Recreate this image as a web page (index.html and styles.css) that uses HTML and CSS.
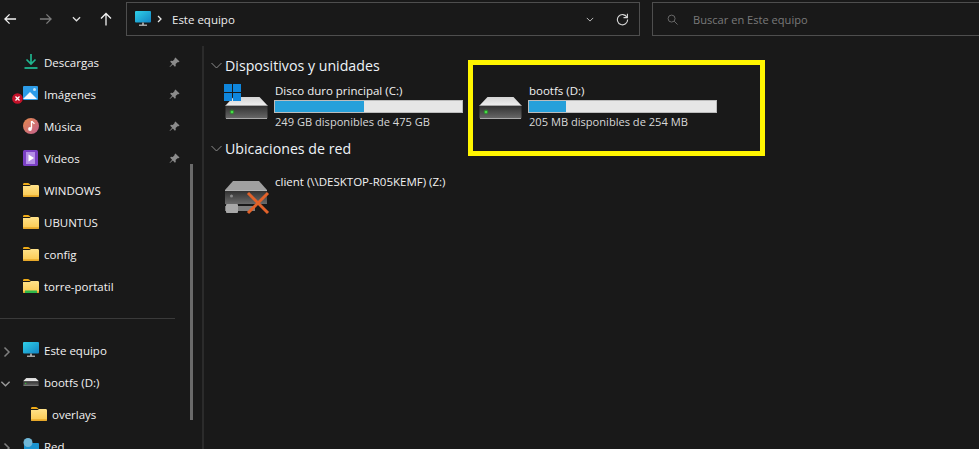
FILE: index.html
```html
<!DOCTYPE html>
<html lang="es">
<head>
<meta charset="utf-8">
<title>Este equipo</title>
<link rel="stylesheet" href="styles.css">
</head>
<body>
<svg class="defs" width="0" height="0" aria-hidden="true">
  <defs>
    <linearGradient id="driveTop" x1="0" y1="0" x2="0" y2="1"><stop offset="0" stop-color="#d4d4d4"/><stop offset="1" stop-color="#efefef"/></linearGradient>
    <linearGradient id="driveFront" x1="0" y1="0" x2="0" y2="1"><stop offset="0" stop-color="#2e2e2e"/><stop offset="1" stop-color="#6a6a6a"/></linearGradient>
    <linearGradient id="screen" x1="0" y1="0" x2="1" y2="1"><stop offset="0" stop-color="#2fd0e8"/><stop offset="1" stop-color="#1384c4"/></linearGradient>
    <linearGradient id="folder" x1="0" y1="0" x2="0" y2="1"><stop offset="0" stop-color="#ffe28a"/><stop offset="1" stop-color="#fbc94f"/></linearGradient>
    <linearGradient id="music" x1="0" y1="0" x2="1" y2="1"><stop offset="0" stop-color="#e58a4c"/><stop offset="1" stop-color="#c25f8e"/></linearGradient>
    <symbol id="i-folder" viewBox="0 0 16 14">
      <path d="M0 1.500C0 .7.500 0 1.300 0h3.600c.6 0 1 .3 1.500.8L7.600 2H0z" fill="#eeaa17"/>
      <path d="M0 3h6.500l1.500-1h6.700c.7 0 1.300.6 1.300 1.300v9.400c0 .7-.6 1.300-1.300 1.300H1.300C.6 14 0 13.400 0 12.700z" fill="url(#folder)"/>
      <path d="M0 12.600c0 .8.600 1.400 1.300 1.400h13.400c.7 0 1.300-.6 1.300-1.400v-.3H0z" fill="#e8a829"/>
    </symbol>
    <symbol id="i-pc" viewBox="0 0 16 16">
      <rect x="0" y="0" width="16" height="11.500" rx="1" fill="url(#screen)"/>
      <rect x="7" y="11.500" width="2" height="2.500" fill="#9a9a9a"/>
      <rect x="4" y="13.600" width="8" height="1.200" fill="#c4c4c4"/>
    </symbol>
    <symbol id="i-drive" viewBox="0 0 42 22">
      <path d="M8 0h26l8 8.500H0z" fill="url(#driveTop)"/>
      <path d="M0 8h42v12.500c0 .8-.7 1.500-1.500 1.500H1.500C.7 22 0 21.300 0 20.500z" fill="url(#driveFront)"/>
      <path d="M0 8h42v1H0zM.5 21h41v1H.5z" fill="#a9a9a9"/>
      <circle cx="6.500" cy="15" r="2.400" fill="#23a823" opacity=".55"/>
      <circle cx="6.500" cy="15" r="1.300" fill="#45e145"/>
    </symbol>
    <symbol id="i-pin" viewBox="0 0 12 12">
      <path d="M7 .5 11.500 5l-1.200.8-1-.2L7.200 7.700l.2 2-1 .8-2.200-2.300L1 11l-.4-.4 2.800-3.200L1.300 5.200l.8-1 2 .2 2.100-2.100-.1-1z" fill="#8b8b8b"/>
    </symbol>
    <symbol id="i-chev-r" viewBox="0 0 8 12"><path d="M1.500 1.500 6 6l-4.500 4.500" fill="none" stroke="#7f7f7f" stroke-width="1.500"/></symbol>
    <symbol id="i-chev-d" viewBox="0 0 12 8"><path d="M1.500 1.500 6 6l4.500-4.500" fill="none" stroke="#9a9a9a" stroke-width="1.500"/></symbol>
    <symbol id="i-exp" viewBox="0 0 11 7"><path d="M.5 1 5.500 6l5-5" fill="none" stroke="#8d8d8d" stroke-width="1"/></symbol>
  </defs>
</svg>

<header class="toolbar">
  <nav class="nav-buttons">
    <svg class="nav-icon nav-back" viewBox="0 0 14 12"><path d="M13 6H1.500M6 1 1 6l5 5" fill="none" stroke="#f2f2f2" stroke-width="1.400"/></svg>
    <svg class="nav-icon nav-forward" viewBox="0 0 14 12"><path d="M1 6h11.500M8 1l5 5-5 5" fill="none" stroke="#7c7c7c" stroke-width="1.400"/></svg>
    <svg class="nav-icon nav-recent" viewBox="0 0 10 6"><path d="M1 1l4 4 4-4" fill="none" stroke="#e0e0e0" stroke-width="1.400"/></svg>
    <svg class="nav-icon nav-up" viewBox="0 0 12 14"><path d="M6 13.500V1.500M1 6.500l5-5 5 5" fill="none" stroke="#f2f2f2" stroke-width="1.300"/></svg>
  </nav>
  <div class="address">
    <svg class="address-pc"><use href="#i-pc"/></svg>
    <svg class="address-sep" viewBox="0 0 6 8"><path d="M1 1l3 3-3 3" fill="none" stroke="#e8e8e8" stroke-width="1.300"/></svg>
    <span class="address-text">Este equipo</span>
    <svg class="address-drop" viewBox="0 0 10 6"><path d="M1 1l4 4 4-4" fill="none" stroke="#d0d0d0" stroke-width="1.100"/></svg>
    <svg class="address-refresh" viewBox="0 0 14 14"><path d="M11.800 4.500A5.500 5.500 0 1 0 12.500 7" fill="none" stroke="#d6d6d6" stroke-width="1.200"/><path d="M12.300 .8v4.200H8.100" fill="none" stroke="#d6d6d6" stroke-width="1.200"/></svg>
  </div>
  <div class="search">
    <svg class="search-icon" viewBox="0 0 12 12"><circle cx="5" cy="5" r="3.800" fill="none" stroke="#6f6f6f" stroke-width="1"/><path d="M7.800 7.800 11.500 11.500" stroke="#6f6f6f" stroke-width="1"/></svg>
    <span class="search-text">Buscar en Este equipo</span>
  </div>
</header>

<div class="main">
  <aside class="sidebar">
    <div class="side-list">
      <div class="side-row">
        <svg class="side-icon" viewBox="0 0 16 16"><path d="M8 0v9.500M3.500 5.500 8 10l4.500-4.500" fill="none" stroke="#1fb58f" stroke-width="1.700"/><path d="M1.500 14h13" stroke="#1fb58f" stroke-width="1.800"/></svg>
        <span class="side-label">Descargas</span>
        <svg class="pin"><use href="#i-pin"/></svg>
      </div>
      <div class="side-row">
        <svg class="side-icon" viewBox="0 0 16 16"><rect width="15" height="14" rx="1" fill="#2d9ce8"/><path d="M0 13 7 6l7 7z" fill="#f4f8fc"/><circle cx="11.500" cy="3.500" r="1.500" fill="#bfe3fb"/></svg>
        <span class="side-label">Imágenes</span>
        <svg class="pin"><use href="#i-pin"/></svg>
        <svg class="badge-error" viewBox="0 0 12 12"><circle cx="6" cy="6" r="5.800" fill="#c4122a"/><path d="M3.800 3.800l4.400 4.400M8.200 3.800 3.800 8.200" stroke="#fff" stroke-width="1.400"/></svg>
      </div>
      <div class="side-row">
        <svg class="side-icon" viewBox="0 0 16 16"><circle cx="8" cy="8" r="8" fill="url(#music)"/><path d="M8.500 3v7.500" stroke="#fff" stroke-width="1.300"/><path d="M8.800 3c.4 1.500 2 1.500 2.500 3" fill="none" stroke="#fff" stroke-width="1.200"/><circle cx="7" cy="11" r="1.900" fill="#fff"/></svg>
        <span class="side-label">Música</span>
        <svg class="pin"><use href="#i-pin"/></svg>
      </div>
      <div class="side-row">
        <svg class="side-icon" viewBox="0 0 16 16"><rect width="15" height="16" rx="1.500" fill="#7a3fc4"/><rect x="3" y="2" width="9" height="12" fill="#b48fe6"/><path d="M5.500 4.500 11 8l-5.500 3.500z" fill="#fff"/></svg>
        <span class="side-label">Vídeos</span>
        <svg class="pin"><use href="#i-pin"/></svg>
      </div>
      <div class="side-row"><svg class="side-icon"><use href="#i-folder"/></svg><span class="side-label">WINDOWS</span></div>
      <div class="side-row"><svg class="side-icon"><use href="#i-folder"/></svg><span class="side-label">UBUNTUS</span></div>
      <div class="side-row"><svg class="side-icon"><use href="#i-folder"/></svg><span class="side-label">config</span></div>
      <div class="side-row">
        <svg class="side-icon" viewBox="0 0 16 14"><use href="#i-folder" width="16" height="14"/><rect x="2" y="11.500" width="12" height="2.500" fill="#2fb84a"/></svg>
        <span class="side-label">torre-portatil</span>
      </div>
      <div class="side-separator"></div>
      <div class="side-row">
        <svg class="tree-chev"><use href="#i-chev-r"/></svg>
        <svg class="side-icon"><use href="#i-pc"/></svg>
        <span class="side-label">Este equipo</span>
      </div>
      <div class="side-row">
        <svg class="tree-chev tree-open"><use href="#i-chev-d"/></svg>
        <svg class="side-icon side-drive"><use href="#i-drive"/></svg>
        <span class="side-label">bootfs (D:)</span>
      </div>
      <div class="side-row side-child"><svg class="side-icon"><use href="#i-folder"/></svg><span class="side-label">overlays</span></div>
      <div class="side-row">
        <svg class="tree-chev"><use href="#i-chev-r"/></svg>
        <svg class="side-icon" viewBox="0 0 16 16"><rect x="1" y="5" width="15" height="11" rx="1" fill="#1a93d0"/><circle cx="5" cy="4.500" r="4.500" fill="#6fb7d8"/></svg>
        <span class="side-label">Red</span>
      </div>
    </div>
    <div class="scroll-track"><div class="scroll-thumb"></div></div>
  </aside>

  <main class="content">
    <h2 class="group-title">
      <svg class="expander"><use href="#i-exp"/></svg>Dispositivos y unidades
    </h2>
    <div class="tiles">
      <div class="tile">
        <div class="tile-icon">
          <svg class="drive-big"><use href="#i-drive"/></svg>
          <svg class="win-logo" viewBox="0 0 17 17"><path d="M0 0h8v8H0zM9 0h8v8H9zM0 9h8v8H0zM9 9h8v8H9z" fill="#0f86dc"/></svg>
        </div>
        <div class="tile-body">
          <div class="tile-name">Disco duro principal (C:)</div>
          <div class="meter"><div class="meter-fill" style="width:47.600%"></div></div>
          <div class="tile-info">249 GB disponibles de 475 GB</div>
        </div>
      </div>
      <div class="tile">
        <div class="tile-icon"><svg class="drive-big"><use href="#i-drive"/></svg></div>
        <div class="tile-body">
          <div class="tile-name">bootfs (D:)</div>
          <div class="meter"><div class="meter-fill" style="width:20%"></div></div>
          <div class="tile-info">205 MB disponibles de 254 MB</div>
        </div>
        <div class="highlight"></div>
      </div>
    </div>
    <h2 class="group-title group-network">
      <svg class="expander"><use href="#i-exp"/></svg>Ubicaciones de red
    </h2>
    <div class="tile tile-net">
      <div class="tile-icon">
        <svg class="net-drive" viewBox="0 0 45 34">
          <path d="M8 0h26l8 9H0z" fill="#a0a0a0"/>
          <path d="M0 9h42v14H0z" fill="url(#driveFront)"/>
          <path d="M0 9h42v1H0z" fill="#b0b0b0"/>
          <circle cx="6.500" cy="15" r="1.500" fill="#8a8a8a"/>
          <rect x="0" y="25" width="30" height="5" fill="#7e7e7e"/>
          <rect x="1" y="23" width="12" height="9" rx="1" fill="#a8a8a8"/>
          <path d="M23 12l20 20M43 12 23 32" stroke="#e2622a" stroke-width="3"/>
        </svg>
      </div>
      <div class="tile-body"><div class="tile-name">client (\\DESKTOP-R05KEMF) (Z:)</div></div>
    </div>
  </main>
</div>
</body>
</html>
```
FILE: styles.css
```css
* { box-sizing: border-box; }

html, body {
  margin: 0;
  height: 100%;
  overflow: hidden;
}

body {
  background: #191919;
  color: #f2f2f2;
  font-family: "Open Sans", "Noto Sans", sans-serif;
  font-size: 11.500px;
  display: flex;
  flex-direction: column;
}

.defs { position: absolute; }

.toolbar {
  display: flex;
  align-items: flex-start;
  height: 46px;
  padding-top: 2px;
  flex: none;
}

.nav-buttons {
  width: 126px;
  height: 34px;
  flex: none;
  display: flex;
  align-items: center;
  padding-left: 4px;
}

.nav-icon { flex: none; display: block; }
.nav-back { width: 13px; height: 12px; }
.nav-forward { width: 13px; height: 12px; margin-left: 22px; }
.nav-recent { width: 9px; height: 6px; margin-left: 20px; }
.nav-up { width: 12px; height: 14px; margin-left: 19px; }

.address {
  width: 514px;
  height: 34px;
  flex: none;
  border: 1px solid #4e4e4e;
  display: flex;
  align-items: center;
  padding-left: 8px;
}

.address-pc { width: 16px; height: 16px; }
.address-sep { width: 6px; height: 8px; margin-left: 6px; }
.address-text { margin-left: 9px; flex: 1; color: #ededed; }
.address-drop { width: 8px; height: 5px; margin-right: 22px; }
.address-refresh { width: 13px; height: 13px; margin-right: 10px; }

.search {
  flex: 1;
  height: 34px;
  margin-left: 12px;
  border: 1px solid #4e4e4e;
  border-right: 0;
  display: flex;
  align-items: center;
  padding-left: 14px;
  color: #7a7a7a;
  font-size: 11.100px;
}

.search-icon { width: 11px; height: 11px; flex: none; }
.search-text { margin-left: 15px; }

.main {
  flex: 1;
  display: flex;
  min-height: 0;
}

.sidebar {
  width: 204px;
  flex: none;
  position: relative;
  border-right: 2px solid #2b2b2b;
  overflow: hidden;
}

.side-list { width: 190px; }

.side-row {
  height: 32px;
  display: flex;
  align-items: center;
  padding-left: 23px;
  position: relative;
}

.side-child { padding-left: 31px; }

.side-icon {
  width: 16px;
  height: 16px;
  flex: none;
}

.side-drive { height: 8px; }

.side-label {
  margin-left: 5px;
  flex: 1;
  white-space: nowrap;
}

.pin {
  width: 11px;
  height: 11px;
  flex: none;
  margin-right: 10px;
}

.badge-error {
  position: absolute;
  left: 12px;
  top: 15px;
  width: 11px;
  height: 11px;
}

.tree-chev {
  position: absolute;
  left: 3px;
  top: 12px;
  width: 8px;
  height: 12px;
}

.tree-open { left: 0; top: 14px; width: 11px; height: 8px; }

.side-separator {
  height: 1px;
  width: 175px;
  background: #3a3a3a;
  margin: 16px 0 15px;
}

.scroll-track {
  position: absolute;
  left: 190px;
  top: 118px;
  width: 3px;
  height: 256px;
}

.scroll-thumb {
  width: 100%;
  height: 100%;
  background: #6a6a6a;
}

.content {
  flex: 1;
  padding: 8px 0 0 7px;
}

.group-title {
  margin: 0;
  height: 22px;
  display: flex;
  align-items: center;
  font-size: 14.200px;
  font-weight: 400;
  color: #eef3f8;
  white-space: nowrap;
}

.expander {
  width: 11px;
  height: 7px;
  margin-right: 3px;
  flex: none;
}

.tiles {
  display: flex;
  gap: 15px;
  margin: 7px 0 0 14px;
}

.tile {
  width: 239px;
  display: flex;
  position: relative;
  flex: none;
}

.tile-icon {
  width: 49px;
  flex: none;
  position: relative;
}

.drive-big {
  position: absolute;
  left: 0;
  top: 14px;
  width: 43px;
  height: 22px;
}

.win-logo {
  position: absolute;
  left: -1px;
  top: 1px;
  width: 17px;
  height: 17px;
}

.tile-body { width: 189px; flex: none; }

.tile-name { height: 17px; line-height: 15px; padding-left: 1px; white-space: nowrap; }

.meter {
  height: 13px;
  border: 1px solid #bcbcbc;
  background: #e6e6e6;
}

.meter-fill {
  height: 100%;
  background: #26a0da;
}

.tile-info {
  height: 17px;
  margin-top: 1px;
  line-height: 15px;
  padding-left: 1px;
  color: #d8d8d8;
  font-size: 11.100px;
  white-space: nowrap;
}

.highlight {
  position: absolute;
  left: -11px;
  top: -23px;
  width: 297px;
  height: 96px;
  border: 5px solid #fff500;
}

.group-network { margin-top: 6px; }

.tile-net {
  margin: 15px 0 0 14px;
}

.net-drive {
  position: absolute;
  left: 0;
  top: 7px;
  width: 45px;
  height: 34px;
}
```
